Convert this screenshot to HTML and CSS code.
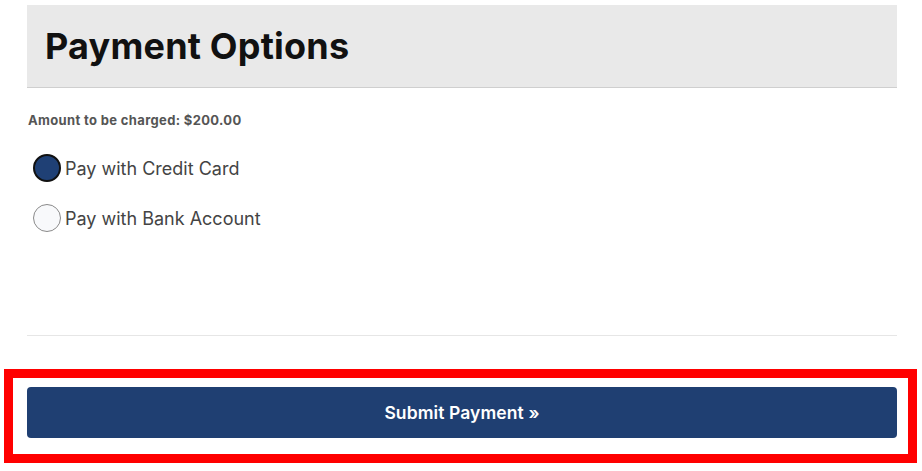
FILE: index.html
```html
<!DOCTYPE html>
<html>
<head>
<meta charset="utf-8">
<link rel="stylesheet" href="styles.css">
</head>
<body>
<div class="page">
  <div class="panel-head">
    <h1 class="title">Payment Options</h1>
  </div>
  <div class="panel-body">
    <p class="amount">Amount to be charged: $200.00</p>
    <label class="option">
      <span class="radio radio-on"></span>
      <span class="option-text">Pay with Credit Card</span>
    </label>
    <label class="option">
      <span class="radio"></span>
      <span class="option-text">Pay with Bank Account</span>
    </label>
  </div>
  <div class="divider"></div>
  <div class="highlight">
    <button class="submit" type="button">Submit Payment »</button>
  </div>
</div>
</body>
</html>
```

FILE: styles.css
```css
html, body {
  margin: 0;
  padding: 0;
  background: #ffffff;
}
body {
  font-family: Inter, "Open Sans", "Liberation Sans", sans-serif;
  width: 922px;
  height: 471px;
  overflow: hidden;
}
.page {
  padding-top: 5px;
}
.panel-head {
  margin: 0 25px 0 27px;
  height: 82px;
  background: #e9e9e9;
  border-bottom: 1px solid #cfcfcf;
  display: flex;
  align-items: center;
  padding-left: 18px;
}
.title {
  margin: 0;
  font-size: 36px;
  font-weight: 700;
  color: #111111;
  letter-spacing: 0.2px;
}
.panel-body {
  margin: 0 25px 0 28px;
  padding-top: 24px;
  height: 223px;
}
.amount {
  margin: 0 0 25px 0;
  font-size: 13px;
  font-weight: 700;
  color: #555555;
  line-height: 16px;
  letter-spacing: 0.35px;
}
.option {
  display: flex;
  align-items: center;
  gap: 4px;
  height: 30px;
  margin-bottom: 20px;
  margin-left: 5px;
}
.radio {
  box-sizing: border-box;
  width: 28px;
  height: 28px;
  border-radius: 50%;
  border: 1px solid #8a8a8a;
  background: #f8f9fb;
}
.radio-on {
  border: 2px solid #111111;
  background: #1f4075;
}
.option-text {
  font-size: 18px;
  color: #444444;
  letter-spacing: 0;
}
.divider {
  margin: 0 25px 0 27px;
  height: 1px;
  background: #e6e6e6;
}
.highlight {
  margin: 33px 5px 0 4px;
  border: 9px solid #ff0000;
  padding: 9px 11px 16px 14px;
}
.submit {
  display: block;
  width: 100%;
  height: 51px;
  border: none;
  border-radius: 4px;
  background: #1f3f72;
  color: #ffffff;
  font-family: Inter, "Open Sans", "Liberation Sans", sans-serif;
  font-size: 17.5px;
  font-weight: 600;
  letter-spacing: 0.1px;
  cursor: pointer;
}
```
